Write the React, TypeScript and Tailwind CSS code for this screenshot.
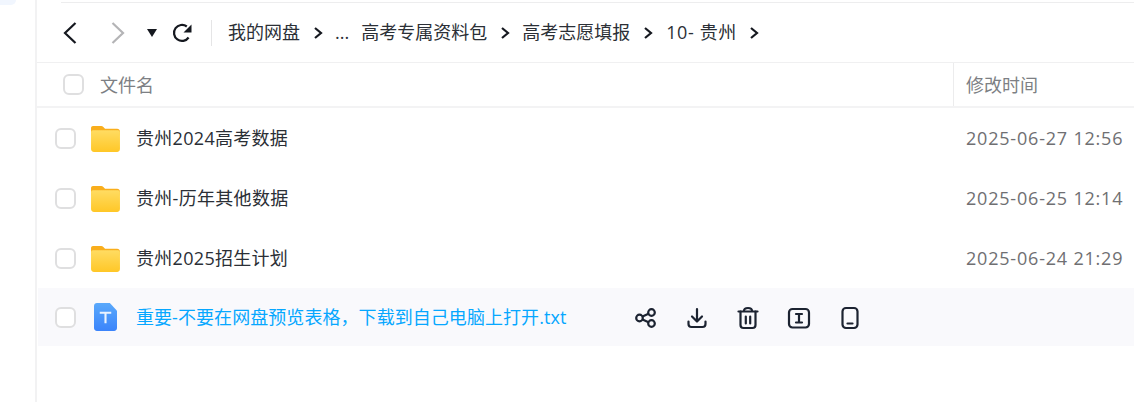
const fontStack = '[font-family:"Open_Sans","Noto_Sans_CJK_SC",sans-serif]';

const crumbs = ['我的网盘', '...', '高考专属资料包', '高考志愿填报', '10- 贵州'];

const folders = [
  { name: '贵州2024高考数据', time: '2025-06-27 12:56' },
  { name: '贵州-历年其他数据', time: '2025-06-25 12:14' },
  { name: '贵州2025招生计划', time: '2025-06-24 21:29' },
];

function Checkbox() {
  return <div className="w-[21px] h-[21px] shrink-0 rounded-[6px] border-2 border-[#dfdfe0] bg-white" />;
}

function FolderIcon() {
  return (
    <svg width="29" height="27" viewBox="0 0 30 28" className="shrink-0">
      <defs>
        <linearGradient id="folderFront" x1="0" y1="0" x2="0" y2="1">
          <stop offset="0" stopColor="#ffdc62" />
          <stop offset="1" stopColor="#ffc727" />
        </linearGradient>
      </defs>
      <path d="M2 1h8.5c1 0 1.6.4 2.3 1.2L14.5 4H27c1.7 0 3 1.3 3 3v4H0V3c0-1.2.9-2 2-2z" fill="#f9ae1c" />
      <path d="M2 5.500h26c1.100 0 2 .9 2 2V25c0 1.700-1.300 3-3 3H3c-1.700 0-3-1.300-3-3V7.500c0-1.100.9-2 2-2z" fill="url(#folderFront)" />
    </svg>
  );
}

function TextFileIcon() {
  return (
    <svg width="23" height="28" viewBox="0 0 24 29" className="shrink-0">
      <defs>
        <linearGradient id="txtFile" x1="0" y1="0" x2="0" y2="1">
          <stop offset="0" stopColor="#5aa9fb" />
          <stop offset="1" stopColor="#3b84fb" />
        </linearGradient>
      </defs>
      <path d="M3 0h13.500L24 8v18c0 1.700-1.300 3-3 3H3c-1.700 0-3-1.300-3-3V3c0-1.700 1.300-3 3-3z" fill="url(#txtFile)" />
      <path d="M6 9h12v2.200h-4.900V21h-2.200v-9.800H6z" fill="#eaf3ff" />
    </svg>
  );
}

function ActionIcons() {
  const cls = 'w-[24px] h-[24px] fill-none stroke-[#1c2331] stroke-[2.2]';
  return (
    <div className="flex items-center gap-[27px] ml-[68px] mt-[1px]">
      <svg viewBox="0 0 24 24" className={cls}>
        <circle cx="5.500" cy="12" r="3.300" />
        <circle cx="17.500" cy="6.500" r="3.300" />
        <circle cx="17.500" cy="17.500" r="3.300" />
        <path d="M8.500 10.600l6-2.800M8.500 13.400l6 2.800" />
      </svg>
      <svg viewBox="0 0 24 24" className={cls} strokeLinecap="round" strokeLinejoin="round">
        <path d="M12 3v12M7 10.500l5 5 5-5" />
        <path d="M3.500 15.500v2.500c0 1.700 1.300 3 3 3h11c1.700 0 3-1.300 3-3v-2.500" />
      </svg>
      <svg viewBox="0 0 24 24" className={cls} strokeLinecap="round" strokeLinejoin="round">
        <path d="M2.500 5.500h19" />
        <path d="M8 5c0-2 1.500-3 4-3s4 1 4 3" />
        <path d="M4.500 5.500V19c0 1.700 1.300 3 3 3h9c1.700 0 3-1.300 3-3V5.500" />
        <path d="M9.800 10.500v7M14.200 10.500v7" />
      </svg>
      <svg viewBox="0 0 24 24" className={cls} strokeLinecap="round" strokeLinejoin="round">
        <rect x="2" y="3" width="20" height="18.500" rx="3.500" />
        <path d="M9 8h6M9 16.500h6M12 8v8.500" />
      </svg>
      <svg viewBox="0 0 24 24" className={cls} strokeLinecap="round" strokeLinejoin="round">
        <rect x="4.500" y="2" width="15" height="20" rx="3.500" />
        <path d="M9.500 17.500h5" />
      </svg>
    </div>
  );
}

export default function App() {
  return (
    <div className={`w-[1134px] h-[402px] overflow-hidden bg-white flex ${fontStack}`}>
      {/* Sidebar stub */}
      <div className="w-[37px] shrink-0 border-r-2 border-[#f2f2f3]">
        <div className="w-[16px] h-[5px] rounded-br-[6px] bg-[#f1f6fe]" />
      </div>

      <div className="flex-1 min-w-0 pt-[2px]">
        <div className="ml-[24px] h-[1px] bg-[#ededee]" />

        {/* Toolbar */}
        <div className="h-[60px] flex items-center border-b border-[#f0f0f1]">
          <svg width="14" height="22" viewBox="0 0 14 22" className="ml-[26px] shrink-0">
            <path d="M12.500 1L2 11l10.500 10" fill="none" stroke="#15181f" strokeWidth="2.200" />
          </svg>
          <svg width="14" height="22" viewBox="0 0 14 22" className="ml-[34px] shrink-0">
            <path d="M1.500 1L12 11 1.500 21" fill="none" stroke="#b4b4b6" strokeWidth="2.200" />
          </svg>
          <svg width="10" height="8" viewBox="0 0 10 8" className="ml-[22px] shrink-0">
            <path d="M0 0h10L5 8z" fill="#15181f" />
          </svg>
          <svg width="20" height="20" viewBox="0 0 20 20" className="ml-[15px] shrink-0">
            <path d="M16.600 14.500A8 8 0 1 1 14.800 3.500" fill="none" stroke="#15181f" strokeWidth="2.200" />
            <path d="M19.500 1.500v8h-8z" fill="#15181f" />
          </svg>
          <div className="ml-[19px] w-px h-[26px] bg-[#e5e5e6]" />
          <div className="ml-[16px] flex items-center text-[18px] text-[#2b2f36] whitespace-nowrap">
            {crumbs.map((c, i) => (
              <div key={i} className="flex items-center">
                <span className={i === 4 ? 'ml-[1px] tracking-[0.6px]' : ''}>{c}</span>
                {i !== 1 && (
                  <svg width="10" height="14" viewBox="0 0 10 14" className="mx-[12.500px]">
                    <path d="M2 2l6 5-6 5" fill="none" stroke="#15181f" strokeWidth="2.200" />
                  </svg>
                )}
                {i === 1 && <span className="w-[12px]" />}
              </div>
            ))}
          </div>
        </div>

        {/* Table head */}
        <div className="h-[45px] flex items-stretch border-b-2 border-[#f3f3f4] text-[18px] text-[#7d7f84]">
          <div className="flex-1 flex items-center pl-[26px] gap-[16px]">
            <Checkbox />
            <span className="mt-[2px]">文件名</span>
          </div>
          <div className="w-[181px] flex items-center pl-[12px] border-l border-[#ececed]">
            <span className="mt-[2px]">修改时间</span>
          </div>
        </div>

        {/* Rows */}
        {folders.map((f) => (
          <div key={f.name} className="h-[60px] flex items-center pl-[18px]">
            <Checkbox />
            <div className="ml-[15px]"><FolderIcon /></div>
            <span className="ml-[16px] flex-1 text-[18px] tracking-[0.3px] text-[#2b2f36]">{f.name}</span>
            <span className="w-[168px] text-[18px] text-[#6f6f72] tracking-[0.8px] whitespace-nowrap">{f.time}</span>
          </div>
        ))}

        <div className="h-[58px] ml-[1px] flex items-center pl-[17px] bg-[#f9f9fc]">
          <Checkbox />
          <div className="ml-[18px]"><TextFileIcon /></div>
          <span className="ml-[19px] text-[18px] tracking-[0.06px] text-[#06a7ff] whitespace-nowrap">重要-不要在网盘预览表格，下载到自己电脑上打开.txt</span>
          <ActionIcons />
        </div>
      </div>
    </div>
  );
}
